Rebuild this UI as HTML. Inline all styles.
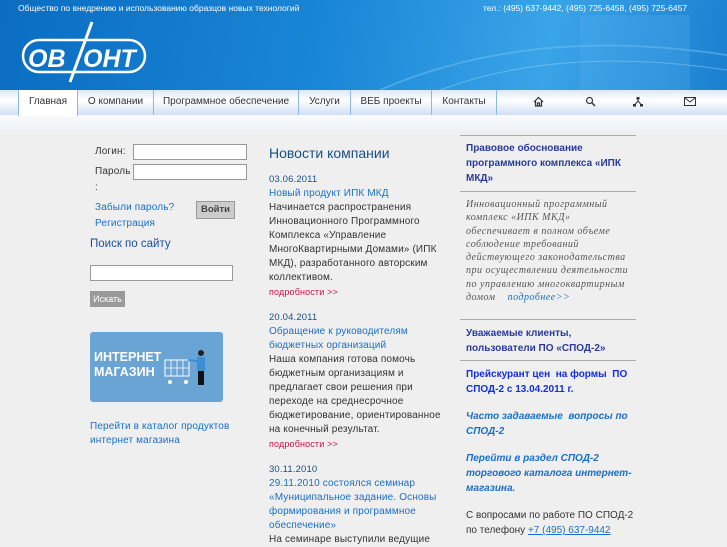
<!DOCTYPE html>
<html><head><meta charset="utf-8"><style>
*{margin:0;padding:0;box-sizing:border-box}
body{width:727px;height:545px;overflow:hidden;background:#efefef;font-family:"Liberation Sans","DejaVu Sans",sans-serif;font-size:11px;color:#333;position:relative}
.a{position:absolute}
#hd{left:0;top:0;width:727px;height:90px;background:linear-gradient(100deg,#0a6dc2 0%,#1a86d6 45%,#3aa4e8 75%,#1b7fd0 100%)}
#nav{left:0;top:90px;width:727px;height:25px;background:linear-gradient(#d9e8f8,#ffffff 40%,#cfe0f3)}
#band{left:0;top:115px;width:727px;height:15px;background:linear-gradient(#f8fafd,#eef2f6)}
.tab{position:absolute;top:90px;height:25px;line-height:23px;font-size:10px;color:#333;text-align:center;border-right:1px solid #8fb8e0}
.lnk{color:#1a6fc8}
.t{line-height:15.5px;font-size:10px;letter-spacing:.15px}
.n{line-height:14px}
input{position:absolute;border:1px solid #999;background:#fff}
.sep{position:absolute;left:460px;width:176px;height:1px;background:#aaa}
</style></head><body>
<div id="hd" class="a"></div>
<svg class="a" style="left:380px;top:15px" width="347" height="75"><path d="M0 75 Q150 10 347 40" stroke="#6ec0f0" stroke-width="2" fill="none" opacity=".5"/><path d="M60 75 Q180 30 347 55" stroke="#9ad4f6" stroke-width="1" fill="none" opacity=".5"/><rect x="200" y="0" width="110" height="75" fill="#5db4ee" opacity=".25"/></svg>
<div class="a" style="left:18px;top:3px;color:#fff;font-size:8.5px">Общество по внедрению и использованию образцов новых технологий</div>
<div class="a" style="left:483px;top:3px;color:#fff;font-size:8.5px">тел.: (495) 637-9442, (495) 725-6458, (495) 725-6457</div>
<svg class="a" style="left:20px;top:20px" width="130" height="66"><rect x="3" y="20" width="122" height="32" rx="16" fill="none" stroke="#fff" stroke-width="2.5"/><path d="M72 2 L50 62" stroke="#fff" stroke-width="3"/><text x="8" y="47" fill="#fff" font-family="Liberation Sans" font-style="italic" font-weight="bold" font-size="25">ОВ</text><text x="63" y="47" fill="#fff" font-family="Liberation Sans" font-style="italic" font-weight="bold" font-size="25">ОНТ</text></svg>
<div id="nav" class="a"></div>
<div id="band" class="a"></div>
<div class="tab" style="left:18px;width:60px;background:#fff;border-left:1px solid #8fb8e0;height:26px">Главная</div>
<div class="tab" style="left:78px;width:76px">О компании</div>
<div class="tab" style="left:154px;width:145px">Программное обеспечение</div>
<div class="tab" style="left:299px;width:52px">Услуги</div>
<div class="tab" style="left:351px;width:81px">ВЕБ проекты</div>
<div class="tab" style="left:432px;width:65px">Контакты</div>
<svg class="a" style="left:533px;top:96px" width="11" height="11"><path d="M1 6 L5.5 1.5 L10 6 M2.5 5 V10 H8.5 V5 M4.5 10 V7 H6.5 V10" fill="none" stroke="#333" stroke-width="1.2"/></svg>
<svg class="a" style="left:585px;top:96px" width="11" height="11"><circle cx="4.5" cy="4.5" r="3" fill="none" stroke="#333" stroke-width="1.2"/><path d="M6.5 6.5 L10 10" stroke="#333" stroke-width="1.5"/></svg>
<svg class="a" style="left:632px;top:96px" width="12" height="11"><path d="M6 2 V5 M6 5 L2.5 9 M6 5 L9.5 9" stroke="#333" stroke-width="1"/><rect x="4.5" y="1" width="3" height="2.5" fill="#333"/><rect x="1" y="8" width="3" height="2.5" fill="#333"/><rect x="8" y="8" width="3" height="2.5" fill="#333"/></svg>
<svg class="a" style="left:684px;top:97px" width="12" height="9"><rect x=".5" y=".5" width="11" height="8" fill="none" stroke="#333"/><path d="M.5 .5 L6 5 L11.5 .5" fill="none" stroke="#333"/></svg>

<div class="a t" style="left:95px;top:144px">Логин:</div>
<input style="left:133px;top:144px;width:114px;height:16px">
<div class="a t" style="left:95px;top:164px">Пароль<br>:</div>
<input style="left:133px;top:164px;width:114px;height:16px">
<div class="a t lnk" style="left:95px;top:200px">Забыли пароль?<br>Регистрация</div>
<div class="a" style="left:196px;top:201px;width:39px;height:18px;background:#ccc;border:1px solid #999;font-size:9.5px;font-weight:bold;line-height:16px;text-align:center;color:#444">Войти</div>
<div class="a" style="left:90px;top:238px;font-size:11.5px;color:#1a4f9c">Поиск по сайту</div>
<input style="left:90px;top:265px;width:143px;height:16px">
<div class="a" style="left:90px;top:291px;width:35px;height:16px;background:#999;color:#fff;font-size:9px;line-height:16px;text-align:center">Искать</div>
<div class="a" style="left:90px;top:332px;width:133px;height:70px;background:#6aa4d4;border-radius:3px"></div>
<div class="a" style="left:94px;top:350px;color:#fff;font-weight:bold;font-size:12.5px;line-height:15px">ИНТЕРНЕТ<br>МАГАЗИН</div>
<svg class="a" style="left:162px;top:340px" width="58" height="58"><rect x="3" y="20" width="24" height="16" fill="none" stroke="#fff" stroke-width="1"/><path d="M9 20v16M15 20v16M21 20v16M3 28h24" stroke="#fff" stroke-width=".8"/><circle cx="8" cy="42" r="2" fill="#fff"/><circle cx="24" cy="42" r="2" fill="#fff"/><circle cx="39" cy="13" r="3" fill="#222"/><rect x="35" y="17" width="8" height="14" fill="#3b8fd4"/><rect x="36" y="31" width="6" height="14" fill="#111"/><path d="M35 21 L26 20" stroke="#3b8fd4" stroke-width="2"/></svg>
<div class="a t lnk" style="left:90px;top:420px;line-height:14px">Перейти в каталог продуктов<br>интернет магазина</div>

<div class="a" style="left:269px;top:145px;font-size:14px;color:#1a4f80">Новости компании</div>
<div class="a t n" style="left:269px;top:173px;width:178px">
<div style="color:#1a4f80;font-size:9.5px">03.06.2011</div>
<div class="lnk">Новый продукт ИПК МКД</div>
<div>Начинается распространения Инновационного Программного Комплекса «Управление МногоКвартирными Домами» (ИПК МКД), разработанного авторским коллективом.</div>
<div style="color:#d0104a;font-size:9px">подробности &gt;&gt;</div>
<div style="height:12px"></div>
<div style="color:#1a4f80;font-size:9.5px">20.04.2011</div>
<div class="lnk">Обращение к руководителям бюджетных организаций</div>
<div>Наша компания готова помочь бюджетным организациям и предлагает свои решения при переходе на среднесрочное бюджетирование, ориентированное на конечный результат.</div>
<div style="color:#d0104a;font-size:9px">подробности &gt;&gt;</div>
<div style="height:12px"></div>
<div style="color:#1a4f80;font-size:9.5px">30.11.2010</div>
<div class="lnk">29.11.2010 состоялся семинар «Муниципальное задание. Основы формирования и программное обеспечение»</div>
<div>На семинаре выступили ведущие</div>
</div>

<div class="sep" style="top:135px"></div>
<div class="a" style="left:466px;top:141px;width:165px;font-weight:bold;color:#2a3a9a;font-size:10px;line-height:15px">Правовое обоснование программного комплекса «ИПК МКД»</div>
<div class="sep" style="top:191px"></div>
<div class="a" style="left:466px;top:198px;white-space:nowrap;font-family:'Liberation Serif',serif;font-style:italic;color:#555;font-size:10px;line-height:13.3px;letter-spacing:.5px">Инновационный программный<br>комплекс «ИПК МКД»<br>обеспечивает в полном объеме<br>соблюдение требований<br>действующего законодательства<br>при осуществлении деятельности<br>по управлению многоквартирным<br>домом &nbsp;&nbsp; <span style="color:#1a6fc8">подробнее&gt;&gt;</span></div>
<div class="sep" style="top:319px"></div>
<div class="a" style="left:466px;top:326px;width:165px;font-weight:bold;color:#2a3a9a;font-size:10px;line-height:15px">Уважаемые клиенты, пользователи ПО «СПОД-2»</div>
<div class="sep" style="top:360px"></div>
<div class="a" style="left:466px;top:367px;width:168px;font-weight:bold;color:#1030e0;font-size:10px;line-height:15px">Прейскурант цен&nbsp; на формы&nbsp; ПО СПОД-2 с 13.04.2011 г.</div>
<div class="a" style="left:466px;top:409px;width:168px;font-weight:bold;font-style:italic;color:#1a6fc8;font-size:10px;line-height:15px">Часто задаваемые&nbsp; вопросы по СПОД-2</div>
<div class="a" style="left:466px;top:451px;width:168px;font-weight:bold;font-style:italic;color:#1a6fc8;font-size:10px;line-height:15px">Перейти в раздел СПОД-2 торгового каталога интернет-магазина.</div>
<div class="a" style="left:466px;top:508px;width:175px;color:#333;font-size:10px;line-height:15px">С вопросами по работе ПО СПОД-2 по телефону <span style="color:#1a6fc8;text-decoration:underline">+7 (495) 637-9442</span></div>
</body></html>
